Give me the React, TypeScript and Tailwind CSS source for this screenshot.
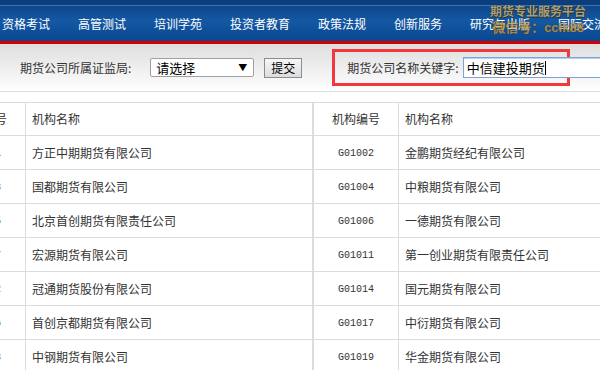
import React from "react";

const navItems = ["资格考试", "高管测试", "培训学苑", "投资者教育", "政策法规", "创新服务", "研究与出版", "国际交流"];

const leftRows = [
  { code: "G01001", name: "方正中期期货有限公司" },
  { code: "G01003", name: "国都期货有限公司" },
  { code: "G01005", name: "北京首创期货有限责任公司" },
  { code: "G01007", name: "宏源期货有限公司" },
  { code: "G01012", name: "冠通期货股份有限公司" },
  { code: "G01016", name: "首创京都期货有限公司" },
  { code: "G01018", name: "中钢期货有限公司" },
];

const rightRows = [
  { code: "G01002", name: "金鹏期货经纪有限公司" },
  { code: "G01004", name: "中粮期货有限公司" },
  { code: "G01006", name: "一德期货有限公司" },
  { code: "G01011", name: "第一创业期货有限责任公司" },
  { code: "G01014", name: "国元期货有限公司" },
  { code: "G01017", name: "中衍期货有限公司" },
  { code: "G01019", name: "华金期货有限公司" },
];

const cjk = "font-['SimSun','Noto_Sans_CJK_SC',sans-serif]";

// one half of the company list
const CompanyTable = ({ rows, nameWidth, border }: { rows: { code: string; name: string }[]; nameWidth: string; border: string }) => (
  <div className={`flex flex-col shrink-0 ${border} border-[#dcdcdc]`}>
    <div className="flex h-[34px] border-t border-b border-[#dcdcdc] items-center">
      <div className="w-[85px] h-full flex items-center justify-center border-r border-[#dcdcdc]">机构编号</div>
      <div className={`${nameWidth} pl-[6px]`}>机构名称</div>
    </div>
    {rows.map((r) => (
      <div key={r.code} className="flex h-[34px] border-b border-[#dcdcdc] items-center">
        <div className="w-[85px] h-full flex items-center justify-center border-r border-[#dcdcdc] font-['Liberation_Mono',monospace] text-[10px] pt-[1px]">
          {r.code}
        </div>
        <div className={`${nameWidth} pl-[6px]`}>{r.name}</div>
      </div>
    ))}
  </div>
);

export default function App() {
  return (
    <div className={`w-[600px] h-[370px] overflow-hidden bg-white text-[#333] text-[12px] ${cjk}`}>
      {/* top navigation */}
      <div className="relative h-[41px] bg-gradient-to-b from-[#0b3f80] via-[#1458a3] to-[#0a4792]">
        <div className="h-[6px] bg-[#0c3d7c] border-b border-[#3b74b6]" />
        <div className="flex -ml-[12px] h-[35px] items-center text-white text-[12px]">
          {navItems.map((n) => (
            <span key={n} className="px-[14px] whitespace-nowrap">
              {n}
            </span>
          ))}
        </div>
        {/* watermark */}
        <div className="absolute left-[490px] top-[5px] flex flex-col items-center font-bold leading-none opacity-80">
          <span className="text-[12px] text-[#c9b57c] [text-shadow:0_0_1px_#2a2000,1px_1px_0_#3a3010]">期货专业服务平台</span>
          <span className="mt-[4px] text-[13px] text-[#c99a3a] [text-shadow:0_0_1px_#3a2000] font-['Liberation_Sans','Noto_Sans_CJK_SC',sans-serif]">
            微信号：cclk88
          </span>
        </div>
      </div>
      <div className="h-[3px] bg-[#d40000]" />

      {/* filter bar */}
      <div className="h-[48px] bg-gradient-to-b from-[#dedede] to-white border-b border-[#dcdcdc] flex items-center whitespace-nowrap">
        <span className="ml-[20px] shrink-0">期货公司所属证监局:</span>
        <div className="ml-[19px] w-[104px] h-[19px] shrink-0 border border-[#a0a0a0] rounded-[2px] bg-white flex items-center justify-between pl-[5px] pr-[6px] text-[13px] text-black">
          <span>请选择</span>
          <span className="text-[9px]">▼</span>
        </div>
        <button className="ml-[10px] h-[20px] shrink-0 px-[6px] border border-[#8c8c8c] bg-gradient-to-b from-[#f7f7f7] to-[#dddddd] text-[12px] text-black leading-none">
          提交
        </button>
        <div className="ml-[30px] w-[238px] h-[37px] shrink-0 border-[3px] border-[#f2383d] flex items-center">
          <span className="ml-[12px] shrink-0">期货公司名称关键字:</span>
          <div className="ml-[4px] w-[170px] h-[21px] shrink-0 border border-[#7da2d8] shadow-[inset_0_1px_1px_#b9cbe8] bg-white flex items-center pl-[3px] text-[13px] text-black">
            中信建投期货<span className="w-px h-[14px] bg-black" />
          </div>
        </div>
      </div>

      {/* company list */}
      <div className="mt-[10px] flex -ml-[59px]">
        <CompanyTable rows={leftRows} nameWidth="w-[286px]" border="border-r" />
        <CompanyTable rows={rightRows} nameWidth="w-[300px]" border="border-l" />
      </div>
    </div>
  );
}
